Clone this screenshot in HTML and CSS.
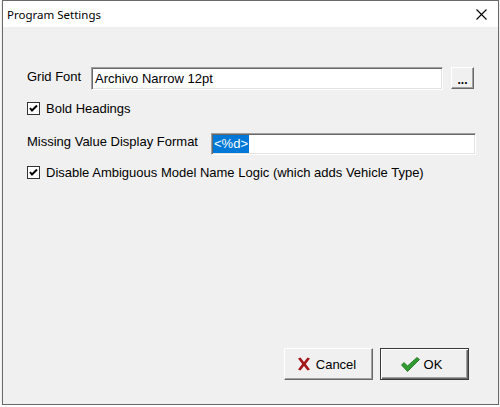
FILE: index.html
```html
<!DOCTYPE html>
<html>
<head>
<meta charset="utf-8">
<link rel="stylesheet" href="styles.css">
</head>
<body>
<div class="window">
  <div class="titlebar">
    <span class="title">Program Settings</span>
    <svg class="close" width="11" height="11" viewBox="0 0 11 11"><path d="M0.5 0.5 L10.5 10.5 M10.5 0.5 L0.5 10.5" stroke="#000" stroke-width="1.1" fill="none"/></svg>
  </div>
  <div class="client">
    <div class="row row-font">
      <span class="label label-font">Grid Font</span>
      <div class="field field-font"><span class="field-text">Archivo Narrow 12pt</span></div>
      <div class="btn-dots"><span class="dots">...</span></div>
    </div>
    <div class="check-row check-bold">
      <svg class="checkbox" width="13" height="13" viewBox="0 0 13 13"><rect x="0.5" y="0.5" width="12" height="12" fill="#fff" stroke="#333"/><path d="M3 6 L5 8.5 L10 3.5" stroke="#000" stroke-width="2" fill="none"/></svg>
      <span class="label">Bold Headings</span>
    </div>
    <div class="row row-missing">
      <span class="label label-missing">Missing Value Display Format</span>
      <div class="field field-missing"><span class="selected">&lt;%d&gt;</span></div>
    </div>
    <div class="check-row check-disable">
      <svg class="checkbox" width="13" height="13" viewBox="0 0 13 13"><rect x="0.5" y="0.5" width="12" height="12" fill="#fff" stroke="#333"/><path d="M3 6 L5 8.5 L10 3.5" stroke="#000" stroke-width="2" fill="none"/></svg>
      <span class="label">Disable Ambiguous Model Name Logic (which adds Vehicle Type)</span>
    </div>
    <div class="buttons">
      <div class="button">
        <svg class="icon" width="14" height="14" viewBox="0 0 14 14"><path d="M1 1.5 L3.5 0.5 L7 5 L10.5 0.5 L13 1.5 L8.8 7 L13 12.5 L10.5 13.5 L7 9 L3.5 13.5 L1 12.5 L5.2 7 Z" fill="#a3161c"/></svg>
        <span class="btn-label">Cancel</span>
      </div>
      <div class="button default">
        <svg class="icon" width="19" height="15" viewBox="0 0 19 15"><path d="M0.5 8 L3 5.5 L6.5 9 L16 0.5 L18.5 2.5 L6.5 14.5 Z" fill="#2f9c2f" stroke="#1c6a1c" stroke-width="0.8"/></svg>
        <span class="btn-label">OK</span>
      </div>
    </div>
  </div>
</div>
</body>
</html>
```
FILE: styles.css
```css
html, body {
  margin: 0;
  padding: 0;
  background: #fff;
}
body {
  font-family: "Liberation Sans", Arial, sans-serif;
  font-size: 13px;
  color: #000;
}
.window {
  margin-left: 2px;
  width: 495px;
  height: 403px;
  border: 1px solid #6a6a6a;
  box-shadow: 0 1px 3px rgba(0,0,0,0.18);
  display: flex;
  flex-direction: column;
  background: #f0f0f0;
}
.titlebar {
  height: 26px;
  background: #fff;
  display: flex;
  align-items: center;
  justify-content: space-between;
  padding: 0 11px 0 4px;
  flex: none;
}
.title {
  font-family: "Noto Sans", "Open Sans", sans-serif;
  font-size: 11.5px;
  color: #000;
}
.close {
  display: block;
}
.client {
  flex: 1;
  display: flex;
  flex-direction: column;
  padding: 40px 0 0 24px;
}
.row {
  display: flex;
  align-items: center;
}
.label {
  white-space: nowrap;
}
.label-font {
  width: 64px;
  flex: none;
  margin-top: -4px;
}
.field {
  height: 19px;
  background: #fff;
  border-top: 1px solid #a0a0a0;
  border-left: 1px solid #a0a0a0;
  border-bottom: 1px solid #ffffff;
  border-right: 1px solid #ffffff;
  box-shadow: inset 1px 1px 0 #696969, inset -1px -1px 0 #e3e3e3;
  display: flex;
  align-items: center;
}
.field-font {
  width: 350px;
  height: 21px;
}
.field-text {
  padding-left: 3px;
}
.btn-dots {
  margin-left: 8px;
  width: 21px;
  height: 20px;
  border-top: 1px solid #fff;
  border-left: 1px solid #fff;
  border-bottom: 1px solid #696969;
  border-right: 1px solid #696969;
  box-shadow: inset -1px -1px 0 #a0a0a0;
  display: flex;
  align-items: center;
  justify-content: center;
  align-self: flex-start;
}
.dots {
  font-weight: bold;
  font-size: 12px;
  position: relative;
  top: 2px;
}
.check-row {
  display: flex;
  align-items: center;
}
.checkbox {
  display: block;
  flex: none;
  margin-right: 6px;
}
.check-bold {
  margin-top: 11px;
}
.row-missing {
  margin-top: 17px;
}
.label-missing {
  width: 184px;
  flex: none;
  margin-top: -6px;
}
.field-missing {
  width: 262px;
  height: 20px;
  padding-left: 1px;
}
.selected {
  background: #0078d7;
  color: #fff;
  padding: 1px;
  line-height: 16px;
}
.check-disable {
  margin-top: 10px;
}
.buttons {
  margin-top: auto;
  margin-bottom: 24px;
  margin-right: 29px;
  display: flex;
  justify-content: flex-end;
  gap: 7px;
}
.button {
  box-sizing: border-box;
  width: 89px;
  height: 32px;
  border-top: 1px solid #fff;
  border-left: 1px solid #fff;
  border-bottom: 1px solid #696969;
  border-right: 1px solid #696969;
  box-shadow: inset -1px -1px 0 #a0a0a0;
  display: flex;
  align-items: center;
  justify-content: center;
  gap: 5px;
  padding-right: 4px;
}
.button.default {
  border: 1px solid #3a3a3a;
  box-shadow: inset 1px 1px 0 #fff, inset -1px -1px 0 #696969, inset -2px -2px 0 #a0a0a0;
  padding-right: 6px;
  gap: 4px;
}
.icon {
  display: block;
}
.btn-label {
  font-size: 13px;
}
```
